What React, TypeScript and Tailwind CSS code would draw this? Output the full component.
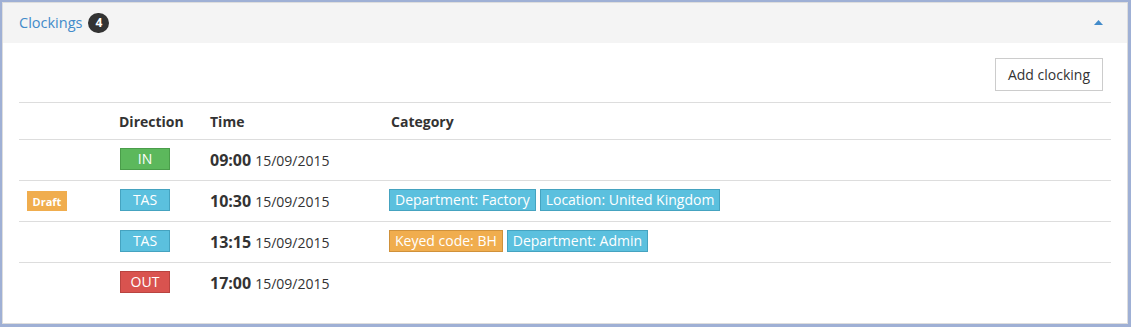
import React from "react";

type Tag = { text: string; color: "info" | "warning" };
type Row = { draft?: boolean; dir: "IN" | "TAS" | "OUT"; time: string; date: string; tags: Tag[] };

const rows: Row[] = [
  { dir: "IN", time: "09:00", date: "15/09/2015", tags: [] },
  {
    draft: true,
    dir: "TAS",
    time: "10:30",
    date: "15/09/2015",
    tags: [
      { text: "Department: Factory", color: "info" },
      { text: "Location: United Kingdom", color: "info" },
    ],
  },
  {
    dir: "TAS",
    time: "13:15",
    date: "15/09/2015",
    tags: [
      { text: "Keyed code: BH", color: "warning" },
      { text: "Department: Admin", color: "info" },
    ],
  },
  { dir: "OUT", time: "17:00", date: "15/09/2015", tags: [] },
];

function DirLabel({ dir }: { dir: Row["dir"] }) {
  const cls =
    dir === "IN"
      ? "bg-[#5cb85c] border-[#4a9d4a]"
      : dir === "OUT"
      ? "bg-[#d9534f] border-[#b94440]"
      : "bg-[#5bc0de] border-[#45a3c0]";
  return (
    <span
      className={`inline-flex items-center justify-center w-[50px] h-[22px] border text-white text-[14px] leading-none ${cls}`}
    >
      {dir}
    </span>
  );
}

function TagLabel({ tag }: { tag: Tag }) {
  const cls =
    tag.color === "warning"
      ? "bg-[#f0ad4e] border-[#d0913a]"
      : "bg-[#5bc0de] border-[#45a3c0]";
  return (
    <span className={`inline-flex items-center h-[22px] px-[5px] border text-white text-[14px] leading-none ${cls}`}>
      {tag.text}
    </span>
  );
}

export default function App() {
  return (
    <div
      className="w-[1131px] h-[327px] bg-white border-[#9fb0d5] border-t-2 border-l-2 border-r-[3px] border-b-[3px] text-[#333]"
      style={{ fontFamily: '"Open Sans", "Noto Sans", sans-serif' }}
    >
      <div className="h-full border border-[#dddddd] flex flex-col">
        <div className="h-[40px] bg-[#f4f4f4] flex items-center justify-between pl-[16px] pr-[24px]">
          <div className="flex items-center gap-[6px]">
            <span className="text-[14.5px] text-[#428bca]">Clockings</span>
            <span className="inline-flex items-center justify-center h-[20px] min-w-[21px] rounded-full bg-[#333] text-white text-[12px] font-bold leading-none">
              4
            </span>
          </div>
          <svg width="9" height="5" viewBox="0 0 9 5" className="mb-[2px]">
            <polygon points="4.5,0 9,5 0,5" fill="#428bca" />
          </svg>
        </div>
        <div className="px-[16px] pt-[15px]">
          <div className="flex justify-end pr-[8px]">
            <button className="h-[33px] px-[12px] border border-[#cccccc] bg-white text-[14px] text-[#333]">
              Add clocking
            </button>
          </div>
          <div className="mt-[11px]">
            <div className="grid grid-cols-[93px_90px_181px_1fr] h-[37px] items-center border-t border-[#dddddd] text-[14px] font-bold">
              <div />
              <div className="px-[7px]">Direction</div>
              <div className="px-[8px]">Time</div>
              <div className="px-[8px]">Category</div>
            </div>
            {rows.map((r, i) => (
              <div
                key={i}
                className="grid grid-cols-[93px_90px_181px_1fr] h-[41px] items-center border-t border-[#dddddd]"
              >
                <div className="px-[8px] flex">
                  {r.draft && (
                    <span className="inline-flex items-center justify-center w-[40px] h-[20px] bg-[#f0ad4e] text-white text-[11px] font-bold leading-none">
                      Draft
                    </span>
                  )}
                </div>
                <div className="pl-[8px] flex mb-[2px]">
                  <DirLabel dir={r.dir} />
                </div>
                <div className="px-[8px] flex items-baseline gap-[4px]">
                  <span className="text-[16px] font-bold">{r.time}</span>
                  <span className="text-[14px]">{r.date}</span>
                </div>
                <div className="pl-[6px] flex gap-[4px] mb-[2px]">
                  {r.tags.map((t, j) => (
                    <TagLabel key={j} tag={t} />
                  ))}
                </div>
              </div>
            ))}
          </div>
        </div>
      </div>
    </div>
  );
}
